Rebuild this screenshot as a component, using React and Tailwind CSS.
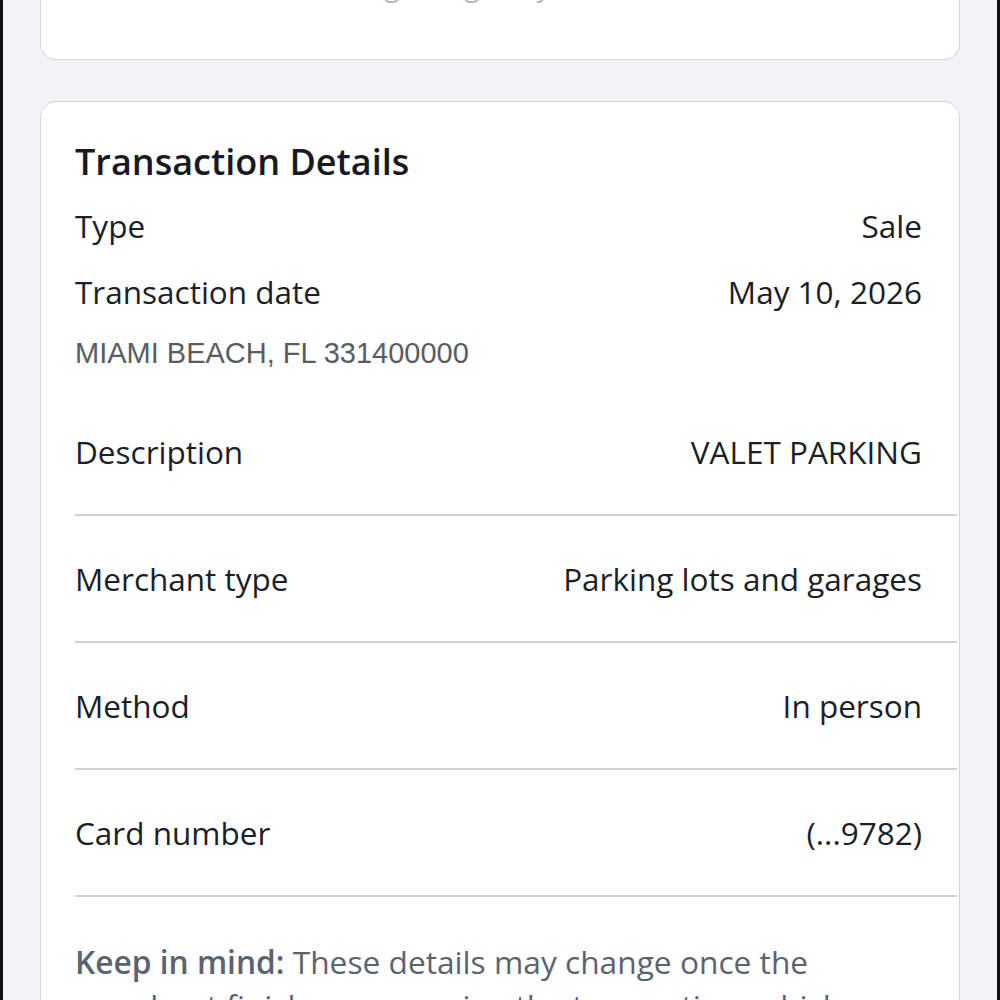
import React from 'react';

const rows = [
  { label: 'Merchant type', value: 'Parking lots and garages' },
  { label: 'Method', value: 'In person' },
  { label: 'Card number', value: '(...9782)' },
];

export default function App() {
  return (
    <div
      className="h-[1000px] overflow-hidden bg-[#f2f3f7] border-l-[3px] border-r-[3px] border-[#111]"
      style={{ fontFamily: '"Open Sans", "Noto Sans", sans-serif' }}
    >
      {/* Top card (cut off) */}
      <div className="ml-[37px] mr-[37px] h-[60px] bg-white border border-t-0 border-[#d3d5d9] rounded-b-[16px] overflow-hidden">
        <p className="-mt-[33px] text-center text-[28px] leading-[36px] text-[#b4b8be]">
          Pending charge to your account
        </p>
      </div>

      {/* Transaction details card */}
      <div className="mt-[41px] ml-[37px] mr-[37px] bg-white border border-[#d3d5d9] rounded-t-[16px] text-[#1b1f27]">
        <div className="pl-[34px]">
          <h2 className="pt-[39px] text-[36px] leading-[42px] font-semibold text-[#161a22] mb-[10px]">
            Transaction Details
          </h2>

          <div className="pr-[37px]">
            <div className="h-[66px] flex items-center justify-between text-[31.5px]">
              <span>Type</span>
              <span>Sale</span>
            </div>
            <div className="h-[66px] flex items-center justify-between text-[31.5px]">
              <span>Transaction date</span>
              <span>May 10, 2026</span>
            </div>
            <div
              className="h-[58px] mb-[7px] flex items-center text-[29px] text-[#585c63]"
              style={{ fontFamily: '"Liberation Sans", Arial, sans-serif' }}
            >
              MIAMI BEACH, FL 331400000
            </div>
          </div>

          <div className="mr-[2px] border-b-2 border-[#cfd1d4]">
            <div className="h-[124px] pr-[35px] flex items-center justify-between text-[31.5px]">
              <span>Description</span>
              <span>VALET PARKING</span>
            </div>
          </div>

          {rows.map((r) => (
            <div key={r.label} className="mr-[2px] border-b-2 border-[#cfd1d4]">
              <div className="h-[125px] pr-[35px] flex items-center justify-between text-[31.5px]">
                <span>{r.label}</span>
                <span>{r.value}</span>
              </div>
            </div>
          ))}

          <p className="pt-[43px] pr-[37px] text-[31.7px] leading-[44px] text-[#5b6370]">
            <span className="font-semibold">Keep in mind:</span> These details may change once the merchant finishes processing the transaction, which can take a few days.
          </p>
        </div>
      </div>
    </div>
  );
}
